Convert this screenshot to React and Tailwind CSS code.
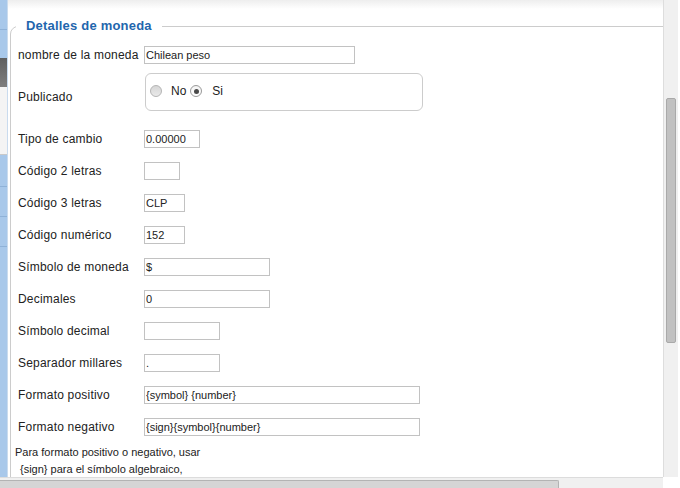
import React from "react";

// ── Left nav strip (only its edge is visible) ────────────────
function NavEdge() {
  return (
    <div className="w-[8px] shrink-0 flex flex-col bg-[#a8c8ea] border-r border-[#c9dbee]">
      <div className="h-[29px] shrink-0" />
      <div className="h-px shrink-0 bg-[#8fb2d8]" />
      <div className="h-[28px] shrink-0" />
      <div className="h-[29px] shrink-0 bg-[linear-gradient(to_bottom,#5f5f5f,#7e7e7e)]" />
      <div className="h-[68px] shrink-0 bg-[#f4f4f4] border-b border-[#c9c9c9]" />
      <div className="h-[31px] shrink-0" />
      <div className="h-px shrink-0 bg-[#8fb2d8]" />
      <div className="h-[29px] shrink-0" />
      <div className="h-px shrink-0 bg-[#8fb2d8]" />
      <div className="h-[29px] shrink-0" />
      <div className="h-px shrink-0 bg-[#8fb2d8]" />
    </div>
  );
}

function Radio({ checked }) {
  return (
    <span
      className={
        "w-[12px] h-[12px] rounded-full border shrink-0 flex items-center justify-center " +
        (checked
          ? "border-[#9a9a9a] bg-[linear-gradient(to_bottom,#f4f4f4,#ffffff)]"
          : "border-[#b4b4b4] bg-[linear-gradient(to_bottom,#d6d6d6,#e9e9e9)]")
      }
    >
      {checked && <span className="w-[5px] h-[5px] rounded-full bg-[#4a4a4a]" />}
    </span>
  );
}

function TextBox({ value, width }) {
  return (
    <input
      readOnly
      value={value}
      style={{ width }}
      className="h-[18px] px-[1px] py-0 border border-[#c2c2c2] bg-white text-[11px] text-[#222] outline-none"
    />
  );
}

function Row({ label, value, width }) {
  return (
    <div className="h-[32px] flex items-center pl-[3px]">
      <span className="w-[126px] shrink-0 text-[12px] leading-[14px] tracking-[0.2px] text-[#222]">{label}</span>
      <TextBox value={value} width={width} />
    </div>
  );
}

const fields = [
  { label: "Tipo de cambio", value: "0.00000", width: 56 },
  { label: "Código 2 letras", value: "", width: 36 },
  { label: "Código 3 letras", value: "CLP", width: 41 },
  { label: "Código numérico", value: "152", width: 41 },
  { label: "Símbolo de moneda", value: "$", width: 126 },
  { label: "Decimales", value: "0", width: 126 },
  { label: "Símbolo decimal", value: "", width: 76 },
  { label: "Separador millares", value: ".", width: 76 },
  { label: "Formato positivo", value: "{symbol} {number}", width: 276 },
  { label: "Formato negativo", value: "{sign}{symbol}{number}", width: 276 },
];

export default function App() {
  return (
    <div className="w-[680px] h-[488px] overflow-hidden bg-white flex flex-col font-['Liberation_Sans',Arial,sans-serif]">
      <div className="h-[477px] flex shrink-0">
        <NavEdge />

        {/* Currency details form */}
        <main className="flex-1 min-w-0 overflow-hidden bg-[linear-gradient(to_bottom,#eeeeee,#ffffff_9px)]">
          <fieldset className="mt-[18px] ml-[2px] -mr-4 px-[4px] pt-[12px] border border-[#cccccc] rounded-tl-[8px] rounded-tr-[8px] min-w-0">
            <legend className="ml-[1px] px-[10px] text-[13px] leading-[16px] font-bold tracking-[0.2px] text-[#1f66ad]">
              Detalles de moneda
            </legend>

            <div className="h-[18px] flex items-center pl-[3px]">
              <span className="w-[126px] shrink-0 text-[12px] leading-[14px] tracking-[0.2px] text-[#222]">
                nombre de la moneda
              </span>
              <TextBox value="Chilean peso" width={211} />
            </div>

            <div className="mt-[9px] flex items-start pl-[3px]">
              <span className="w-[126px] shrink-0 mt-[17px] text-[12px] leading-[14px] tracking-[0.2px] text-[#222]">
                Publicado
              </span>
              <div className="ml-[1px] w-[278px] h-[38px] rounded-[6px] border border-[#cccccc] flex items-center pl-[4px] pb-[2px] text-[12px] text-[#222]">
                <Radio />
                <span className="ml-[9px]">No</span>
                <span className="ml-[4px]">
                  <Radio checked />
                </span>
                <span className="ml-[10px]">Si</span>
              </div>
            </div>

            <div className="mt-[12px]">
              {fields.map((f) => (
                <Row key={f.label} {...f} />
              ))}
            </div>

            <p className="text-[11px] leading-[18px] text-[#222]">Para formato positivo o negativo, usar</p>
            <p className="pl-[5px] text-[11px] leading-[16px] text-[#222]">{"{sign}"} para el símbolo algebraico,</p>
          </fieldset>
        </main>

        {/* Vertical scrollbar */}
        <div className="w-[15px] shrink-0 bg-[#f0f0f0] border-l border-[#dddddd] pt-[98px] pl-[2px]">
          <div className="w-[10px] h-[245px] rounded-[2px] bg-[#c1c1c1] border border-[#a9a9a9]" />
        </div>
        <div className="w-[2px] shrink-0 bg-white" />
      </div>

      {/* Horizontal scrollbar */}
      <div className="flex-1 flex">
        <div className="w-[663px] border-t border-[#dcdcdc] bg-[#f0f0f0] pt-[2px]">
          <div className="w-[559px] h-full rounded-tr-[2px] bg-[#d5d5d5] border-t border-r border-[#b3b3b3]" />
        </div>
        <div className="flex-1 bg-white" />
      </div>
    </div>
  );
}
